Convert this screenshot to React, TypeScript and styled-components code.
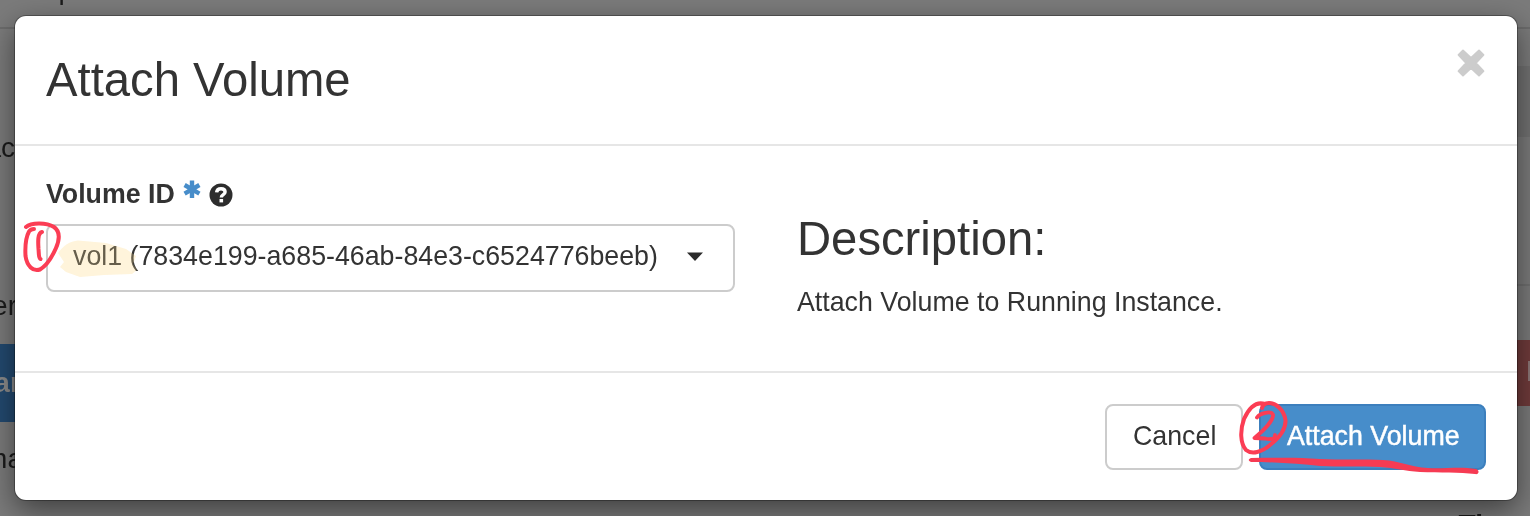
import React from "react";
import styled, { createGlobalStyle } from "styled-components";

const GlobalStyle = createGlobalStyle`
  * { box-sizing: border-box; }
  body { margin: 0; background: #7b7b7b; overflow: hidden; }
  h2, h3, p { margin: 0; font-weight: 400; }
  button { font: inherit; padding: 0; margin: 0; cursor: pointer; }
`;

const Screen = styled.div`
  position: relative;
  width: 1530px;
  height: 516px;
  overflow: hidden;
  padding: 16px 13px 16px 15px;
  font-family: "Liberation Sans", Arial, sans-serif;
  font-size: 28px;
  color: #333;
`;

const Backdrop = styled.div`
  position: absolute;
  inset: 0;
  overflow: hidden;
`;

const Block = styled.div<{ $x: number; $y: number; $w: number; $h: number; $color: string }>`
  position: absolute;
  left: ${(p) => p.$x}px;
  top: ${(p) => p.$y}px;
  width: ${(p) => p.$w}px;
  height: ${(p) => p.$h}px;
  background: ${(p) => p.$color};
`;

const Fragment = styled.span<{ $right: number; $y: number; $color?: string; $bold?: boolean }>`
  position: absolute;
  right: ${(p) => 1530 - p.$right}px;
  top: ${(p) => p.$y}px;
  line-height: 32px;
  white-space: nowrap;
  color: ${(p) => p.$color || "#1b1b1b"};
  font-weight: ${(p) => (p.$bold ? 700 : 400)};
`;

const Modal = styled.section`
  position: relative;
  display: flex;
  flex-direction: column;
  height: 484px;
  background: #fff;
  border-radius: 11px;
  box-shadow: 0 0 0 1px rgba(0, 0, 0, 0.3), 0 10px 30px rgba(0, 0, 0, 0.5);
`;

const Header = styled.header`
  display: flex;
  justify-content: space-between;
  height: 130px;
  padding: 36px 32px 0 31px;
  border-bottom: 2px solid #e6e6e6;
`;

const Heading = styled.h2`
  font-size: 48px;
  line-height: 56px;
  white-space: nowrap;
  transform: scaleX(0.984);
  transform-origin: 0 0;
`;

const CloseButton = styled.button`
  width: 28px;
  height: 28px;
  margin-top: -3px;
  border: 0;
  background: none;
  svg { display: block; }
`;

const Body = styled.div`
  display: flex;
  gap: 62px;
  height: 225px;
  padding: 32px 31px 0;
`;

const Field = styled.div`
  width: 689px;
`;

const Label = styled.div`
  display: flex;
  height: 46px;
  line-height: 32px;
  font-weight: 700;
  svg { display: block; flex: none; }
`;

const LabelText = styled.span`
  width: 137px;
  white-space: nowrap;
  transform: scaleX(0.955);
  transform-origin: 0 0;
`;

const Required = styled.svg`
  margin-top: 2px;
`;

const Help = styled.svg`
  margin: 5px 0 0 8px;
`;

const Select = styled.button`
  display: flex;
  align-items: center;
  width: 689px;
  height: 68px;
  padding: 0 0 4px 25px;
  border: 2px solid #ccc;
  border-radius: 8px;
  background: #fff;
  color: #333;
  text-align: left;
`;

const Narrow = styled.span`
  display: block;
  white-space: nowrap;
  transform: scaleX(0.956);
  transform-origin: 0 0;
`;

const Value = styled(Narrow)`
  width: 614px;
`;

const Description = styled.div`
  padding-top: 33px;
  p { margin-top: 19px; line-height: 32px; }
`;

const Footer = styled.footer`
  display: flex;
  justify-content: flex-end;
  gap: 16px;
  flex: 1;
  padding: 31px 31px 0;
  border-top: 2px solid #e6e6e6;
`;

const Button = styled.button<{ $primary?: boolean }>`
  width: ${(p) => (p.$primary ? 227 : 138)}px;
  height: 66px;
  padding: 0 0 3px 26px;
  border: 2px solid ${(p) => (p.$primary ? "#3c7fbd" : "#ccc")};
  border-radius: 8px;
  background: ${(p) => (p.$primary ? "#478dca" : "#fff")};
  color: ${(p) => (p.$primary ? "#fff" : "#333")};
  -webkit-text-stroke: ${(p) => (p.$primary ? "0.5px #fff" : "0")};
  text-align: left;
`;

const Overlay = styled.svg<{ $blend?: string }>`
  position: absolute;
  left: 0;
  top: 0;
  pointer-events: none;
  mix-blend-mode: ${(p) => p.$blend || "normal"};
`;

const highlightShape =
  "M58 253C63 246 70 241 78 240.5L106 243L126 249L136 256L133 264L137 270L132 274L104 275L80 277L66 272L60 267L64 262Z";

function Asterisk() {
  return (
    <Required width="18" height="19" viewBox="0 0 18 19" stroke="#478dca" strokeWidth="4.4" fill="none">
      <path d="M9 0.5V18M1.6 5L16.4 13.6M1.6 13.6L16.4 5" />
    </Required>
  );
}

function HelpIcon() {
  return (
    <Help width="24" height="24" viewBox="0 0 24 24" fill="none">
      <circle cx="12" cy="12" r="11.5" fill="#2d2d2d" />
      <path d="M7.6 9.4C7.9 6.7 9.6 5.8 12 5.8C14.6 5.8 16.1 7.2 16.1 9.1C16.1 11.7 12.3 11.5 12.3 14.4" stroke="#fff" strokeWidth="3.4" />
      <path d="M10.5 16H14.1V19.4H10.5Z" fill="#fff" />
    </Help>
  );
}

export default function App() {
  return (
    <Screen>
      <GlobalStyle />
      <Backdrop>
        <Block $x={0} $y={27} $w={1530} $h={2} $color="#6c6c6c" />
        <Block $x={1500} $y={66} $w={30} $h={71} $color="#727272" />
        <Block $x={1500} $y={284} $w={30} $h={2} $color="#707070" />
        <Block $x={0} $y={344} $w={30} $h={78} $color="#234a70" />
        <Block $x={1500} $y={340} $w={30} $h={66} $color="#703b3b" />
        <Block $x={1528} $y={361} $w={2} $h={20} $color="#8c7777" />
        <Fragment $right={74} $y={-26}>Comp</Fragment>
        <Fragment $right={15} $y={132}>ac</Fragment>
        <Fragment $right={17} $y={290}>er</Fragment>
        <Fragment $right={27} $y={367} $color="#8b8b8b" $bold>an</Fragment>
        <Fragment $right={23} $y={443}>ma</Fragment>
        <Fragment $right={1483} $y={509} $bold>Ti</Fragment>
      </Backdrop>
      <Modal role="dialog" aria-label="Attach Volume">
        <Header>
          <Heading>Attach Volume</Heading>
          <CloseButton aria-label="Close">
            <svg width="28" height="28" viewBox="0 0 28 28">
              <path
                d="M6 1.5L14 9L22 1.5L26.5 6L19 14L26.5 22L22 26.5L14 19L6 26.5L1.5 22L9 14L1.5 6Z"
                fill="#ccc" stroke="#ccc" strokeWidth="1.8" strokeLinejoin="round"
              />
            </svg>
          </CloseButton>
        </Header>
        <Body>
          <Field>
            <Label>
              <LabelText>Volume ID</LabelText>
              <Asterisk />
              <HelpIcon />
            </Label>
            <Select>
              <Value>vol1 (7834e199-a685-46ab-84e3-c6524776beeb)</Value>
              <svg width="16" height="9" viewBox="0 0 16 9">
                <path d="M0 0.5H16L8 9Z" fill="#2b2b2b" />
              </svg>
            </Select>
          </Field>
          <Description>
            <Heading as="h3">Description:</Heading>
            <p><Narrow>Attach Volume to Running Instance.</Narrow></p>
          </Description>
        </Body>
        <Footer>
          <Button><Narrow>Cancel</Narrow></Button>
          <Button $primary><Narrow>Attach Volume</Narrow></Button>
        </Footer>
      </Modal>
      <Overlay width="1530" height="516" viewBox="0 0 1530 516">
        <path d={highlightShape} fill="#ffe9a8" fillOpacity="0.25" />
      </Overlay>
      <Overlay $blend="multiply" width="1530" height="516" viewBox="0 0 1530 516">
        <path d={highlightShape} fill="#fffaf0" />
      </Overlay>
      <Overlay width="1530" height="516" viewBox="0 0 1530 516" fill="none">
        <g stroke="#fb3d54" strokeWidth="4" strokeLinecap="round" strokeLinejoin="round">
          <path d="M26 227C31 222.5 46 222 54 227C61 232 59 241 56 248C52 257 46 266 40 269.5C33 272 27 266 25.5 256C25 247 26 237 29 231.5C30 230 32 229 34 229" />
          <path d="M42 232C37.5 233 38 242 38.5 249C39 254 38.5 258 40.5 259" />
          <path d="M1265 404C1256 401 1249 408 1244 419C1240 430 1240 443 1246 450C1252 455 1262 452 1270 445C1279 438 1286 429 1285.5 420C1284 410 1276 403 1269 403C1264 403 1262.5 406 1262 408" />
          <path d="M1257 417.5C1260 413 1271 410.5 1273 414.5C1274 420 1263 431 1254.5 438L1265 438.5Q1270 440 1274.5 438L1275 435" strokeWidth="3.8" />
        </g>
        <path
          d="M1251 458C1275 458 1295 457 1320 459C1340 460 1365 459 1383 460C1400 461 1410 467 1428 468C1445 469 1460 466 1476 469C1480 470 1479 475 1475 474C1460 472 1440 473 1420 472C1405 471 1395 468 1380 467C1360 466 1340 467 1320 466C1300 464 1277 462 1251 462C1248 461 1248 459 1251 458Z"
          fill="#f63b53"
        />
      </Overlay>
    </Screen>
  );
}
